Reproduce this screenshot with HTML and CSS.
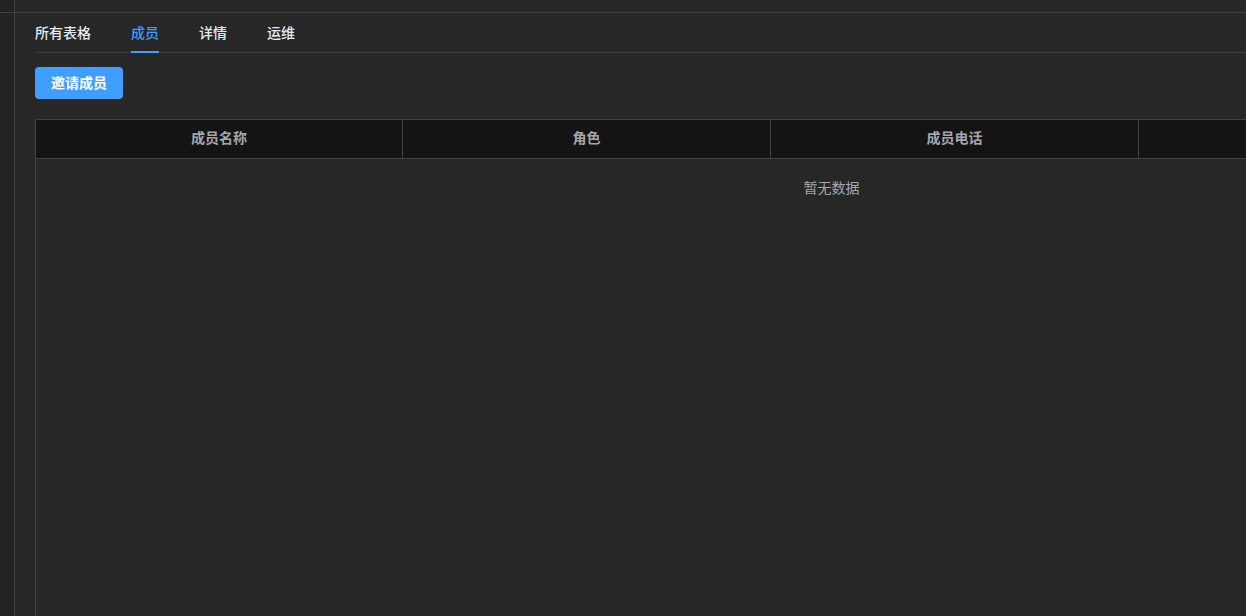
FILE: index.html
```html
<!DOCTYPE html>
<html lang="zh-CN">
<head>
    <meta charset="UTF-8">
    <meta name="viewport" content="width=device-width, initial-scale=1.0">
    <title>成员</title>
    <link rel="stylesheet" href="styles.css">
</head>
<body>
    <div class="layout">
        <!-- Left strip -->
        <div class="side">
            <div class="side-top"></div>
        </div>

        <div class="main">
            <div class="topbar"></div>

            <div class="content">
                <!-- Tabs -->
                <div class="tabs">
                    <div class="tab">所有表格</div>
                    <div class="tab active">成员</div>
                    <div class="tab">详情</div>
                    <div class="tab">运维</div>
                </div>

                <div class="toolbar">
                    <button class="btn-primary">邀请成员</button>
                </div>

                <!-- Members table -->
                <div class="table">
                    <div class="table-header">
                        <div class="th">成员名称</div>
                        <div class="th">角色</div>
                        <div class="th">成员电话</div>
                        <div class="th"></div>
                    </div>
                    <div class="table-body">
                        <div class="empty">暂无数据</div>
                    </div>
                </div>
            </div>
        </div>
    </div>
</body>
</html>
```

FILE: styles.css
```css
body {
    font-family: "Noto Sans CJK SC", "Noto Sans", sans-serif;
    margin: 0;
    padding: 0;
    background-color: #272727;
    color: #e5eaf3;
    overflow: hidden;
}

.layout {
    display: flex;
    height: 100vh;
}

.side {
    width: 14px;
    flex-shrink: 0;
    background-color: #232323;
    border-right: 1px solid #414243;
}

.side-top {
    height: 12px;
    border-bottom: 1px solid #414243;
}

.main {
    flex: 1;
    min-width: 0;
    display: flex;
    flex-direction: column;
    overflow: hidden;
}

.topbar {
    height: 12px;
    flex-shrink: 0;
    border-bottom: 1px solid #414243;
}

.content {
    flex: 1;
    padding: 0 0 0 20px;
    display: flex;
    flex-direction: column;
    min-height: 0;
    overflow: hidden;
}

/* Tabs */
.tabs {
    display: flex;
    height: 39px;
    border-bottom: 1px solid #414243;
    margin-bottom: 14px;
}

.tab {
    position: relative;
    padding: 0 20px;
    line-height: 39px;
    font-size: 14px;
    font-weight: 500;
    color: #e5eaf3;
    cursor: pointer;
}

.tab:first-child {
    padding-left: 0;
}

.tab.active {
    color: #409eff;
}

.tab.active::after {
    content: "";
    position: absolute;
    left: 20px;
    right: 20px;
    bottom: -1px;
    height: 2px;
    background-color: #409eff;
}

.toolbar {
    margin-bottom: 20px;
}

.btn-primary {
    height: 32px;
    padding: 0 16px 2px;
    background-color: #409eff;
    color: #fff;
    border: none;
    border-radius: 4px;
    font-family: inherit;
    font-size: 14px;
    font-weight: bold;
    cursor: pointer;
}

/* Table */
.table {
    width: 1591px;
    flex: 1;
    flex-shrink: 0;
    border-top: 1px solid #414243;
    border-left: 1px solid #414243;
    display: flex;
    flex-direction: column;
}

.table-header {
    display: grid;
    grid-template-columns: 367px 368px 368px 488px;
    background-color: #141414;
    border-bottom: 1px solid #414243;
}

.th {
    height: 38px;
    line-height: 34px;
    padding-bottom: 4px;
    text-align: center;
    font-size: 14px;
    font-weight: bold;
    color: #a3a6ad;
    border-right: 1px solid #414243;
    box-sizing: border-box;
}

.table-body {
    flex: 1;
}

.empty {
    line-height: 56px;
    padding-bottom: 4px;
    text-align: center;
    font-size: 14px;
    color: #a3a6ad;
}
```
